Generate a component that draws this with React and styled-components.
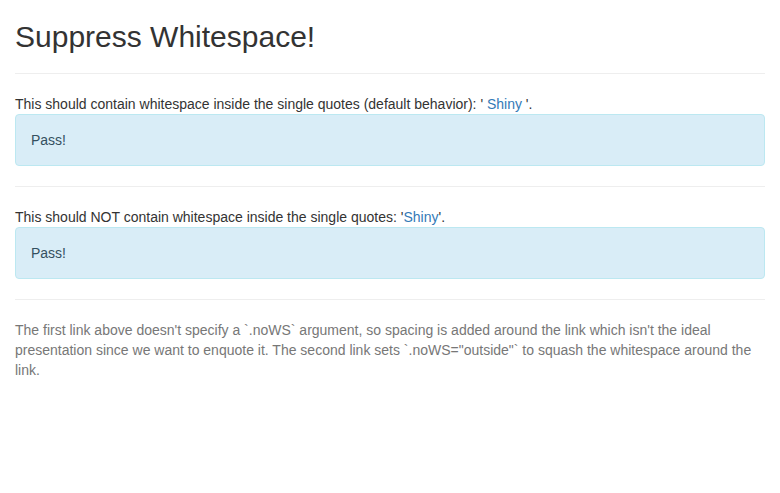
import React from "react";
import styled, { createGlobalStyle } from "styled-components";

const GlobalStyle = createGlobalStyle`
  * {
    box-sizing: border-box;
  }
  html, body {
    margin: 0;
    background: #fff;
  }
  body {
    font-family: "Liberation Sans", Arial, sans-serif;
    font-size: 14px;
    line-height: 1.42857143;
    color: #333;
  }
`;

function App() {
  return (
    <>
      <GlobalStyle />
      <Container>
        <Title>Suppress Whitespace!</Title>
        <Rule />
        <Line>
          This should contain whitespace inside the single quotes (default
          behavior): ' <Link href="#">Shiny</Link> '.
        </Line>
        <Alert>Pass!</Alert>
        <Rule />
        <Line>
          This should NOT contain whitespace inside the single quotes: '
          <Link href="#">Shiny</Link>'.
        </Line>
        <Alert>Pass!</Alert>
        <Rule />
        <Muted>
          The first link above doesn't specify a `.noWS` argument, so spacing
          is added around the link which isn't the ideal presentation since we
          want to enquote it. The second link sets `.noWS="outside"` to squash
          the whitespace around the link.
        </Muted>
      </Container>
    </>
  );
}

export default App;

const Container = styled.div`
  padding: 0 15px;
`;

const Title = styled.h2`
  margin: 20px 0 10px;
  font-size: 30px;
  font-weight: 500;
  line-height: 1.1;
  color: #333;
`;

const Rule = styled.hr`
  margin: 20px 0;
  border: 0;
  border-top: 1px solid #eee;
  height: 0;
`;

const Line = styled.div`
  margin: 0;
`;

const Link = styled.a`
  color: #337ab7;
  text-decoration: none;
`;

const Alert = styled.div`
  padding: 15px;
  margin-bottom: 20px;
  border: 1px solid #bce8f1;
  border-radius: 4px;
  background-color: #d9edf7;
  color: #34505f;
`;

const Muted = styled.p`
  margin: 0 0 10px;
  color: #777;
`;
